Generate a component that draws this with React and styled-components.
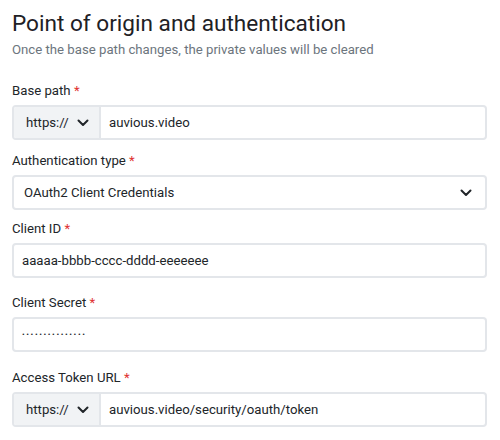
import React from "react";
import styled, { createGlobalStyle } from "styled-components";

const GlobalStyle = createGlobalStyle`
  * {
    box-sizing: border-box;
  }
  body {
    margin: 0;
    background: #ffffff;
    font-family: Roboto, "Liberation Sans", sans-serif;
    color: #212529;
  }
`;

const Page = styled.div`
  width: 500px;
  padding: 8px 13px 0 12px;
`;

const Title = styled.h1`
  margin: 0;
  font-size: 22.6px;
  font-weight: 400;
  line-height: 32px;
  color: #1e2125;
`;

const Subtitle = styled.p`
  margin: 0 0 21px;
  font-size: 13.2px;
  line-height: 20px;
  color: #6c757d;
`;

const Field = styled.div`
  display: flex;
  flex-direction: column;
  margin-bottom: ${({ $gap }) => $gap}px;
`;

const Label = styled.label`
  font-size: 13.2px;
  line-height: 20px;
  margin-bottom: 4px;
  color: #212529;

  span {
    color: #e03131;
  }
`;

const Box = styled.div`
  display: flex;
  align-items: center;
  height: 35px;
  border: 2px solid #e3e6ea;
  border-radius: 4px;
  background: #ffffff;
  overflow: hidden;
`;

const Prefix = styled.div`
  display: flex;
  align-items: center;
  gap: 8px;
  width: 87px;
  height: 100%;
  padding-left: 12px;
  background: #f1f3f5;
  border-right: 2px solid #e3e6ea;
  font-size: 13.2px;
  color: #212529;
`;

const Input = styled.input`
  flex: 1;
  min-width: 0;
  height: 100%;
  border: none;
  outline: none;
  padding: 0 ${({ $pad }) => $pad}px;
  font-family: inherit;
  font-size: 13.2px;
  color: #212529;
  background: transparent;

  &[type="password"] {
    font-size: 8px;
    letter-spacing: 1.6px;
  }
`;

const SelectBox = styled(Box)`
  justify-content: space-between;
  padding: 0 13px 0 10px;
  font-size: 13.2px;
`;

const Chevron = () => (
  <svg width="12" height="8" viewBox="0 0 12 8" fill="none">
    <path
      d="M1.5 1.5L6 6L10.5 1.5"
      stroke="#212529"
      strokeWidth="2"
      strokeLinecap="round"
      strokeLinejoin="round"
    />
  </svg>
);

const Required = ({ children }) => (
  <Label>
    {children} <span>*</span>
  </Label>
);

const UrlInput = ({ value }) => (
  <Box>
    <Prefix>
      https://
      <Chevron />
    </Prefix>
    <Input $pad={8} defaultValue={value} />
  </Box>
);

export default function App() {
  return (
    <>
      <GlobalStyle />
      <Page>
        <Title>Point of origin and authentication</Title>
        <Subtitle>
          Once the base path changes, the private values will be cleared
        </Subtitle>

        <Field $gap={11}>
          <Required>Base path</Required>
          <UrlInput value="auvious.video" />
        </Field>

        <Field $gap={9}>
          <Required>Authentication type</Required>
          <SelectBox>
            OAuth2 Client Credentials
            <Chevron />
          </SelectBox>
        </Field>

        <Field $gap={15}>
          <Required>Client ID</Required>
          <Box>
            <Input $pad={8} defaultValue="aaaaa-bbbb-cccc-dddd-eeeeeee" />
          </Box>
        </Field>

        <Field $gap={16}>
          <Required>Client Secret</Required>
          <Box>
            <Input $pad={8} type="password" defaultValue="secretsecretsec" />
          </Box>
        </Field>

        <Field $gap={0}>
          <Required>Access Token URL</Required>
          <UrlInput value="auvious.video/security/oauth/token" />
        </Field>
      </Page>
    </>
  );
}
